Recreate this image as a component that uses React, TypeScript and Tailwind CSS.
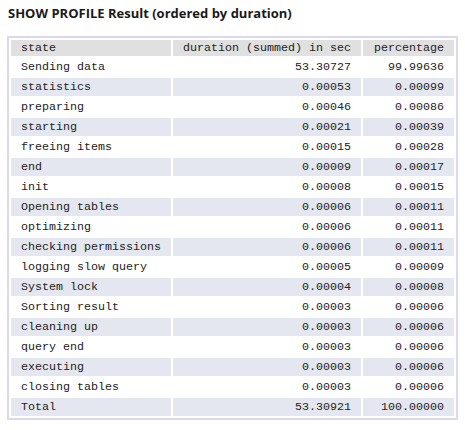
import React from "react";

const rows: [string, string, string][] = [
  ["Sending data", "53.30727", "99.99636"],
  ["statistics", "0.00053", "0.00099"],
  ["preparing", "0.00046", "0.00086"],
  ["starting", "0.00021", "0.00039"],
  ["freeing items", "0.00015", "0.00028"],
  ["end", "0.00009", "0.00017"],
  ["init", "0.00008", "0.00015"],
  ["Opening tables", "0.00006", "0.00011"],
  ["optimizing", "0.00006", "0.00011"],
  ["checking permissions", "0.00006", "0.00011"],
  ["logging slow query", "0.00005", "0.00009"],
  ["System lock", "0.00004", "0.00008"],
  ["Sorting result", "0.00003", "0.00006"],
  ["cleaning up", "0.00003", "0.00006"],
  ["query end", "0.00003", "0.00006"],
  ["executing", "0.00003", "0.00006"],
  ["closing tables", "0.00003", "0.00006"],
  ["Total", "53.30921", "100.00000"],
];

export default function App() {
  return (
    <div className="w-[465px] h-[430px] bg-white text-[#1a1a1a]">
      <div
        className="pl-[8px] pt-[5px] h-[36px] text-[13px] font-bold leading-[16px]"
        style={{ fontFamily: '"Open Sans", Tahoma, sans-serif' }}
      >
        SHOW PROFILE Result (ordered by duration)
      </div>
      <div className="ml-[7px] w-[451px] border-2 border-[#dcd8ef]">
        <table
          className="w-full border-separate border-spacing-[2px] text-[11.67px] leading-[14px] text-[#222]"
          style={{ fontFamily: '"Liberation Mono", "Courier New", monospace' }}
        >
          <thead>
            <tr className="h-[16px]">
              <th className="bg-[#e0e0e0] w-[160px] px-[10px] py-0 text-left font-normal">state</th>
              <th className="bg-[#e0e0e0] w-[188px] px-[10px] py-0 text-right font-normal">duration (summed) in sec</th>
              <th className="bg-[#e0e0e0] px-[10px] py-0 text-right font-normal">percentage</th>
            </tr>
          </thead>
          <tbody>
            {rows.map((r, i) => {
              const bg = i % 2 === 1 ? "bg-[#e4e7ef]" : "bg-white";
              return (
                <tr key={i} className="h-[18px]">
                  <td className={`${bg} px-[10px] py-0 text-left`}>{r[0]}</td>
                  <td className={`${bg} px-[10px] py-0 text-right`}>{r[1]}</td>
                  <td className={`${bg} px-[10px] py-0 text-right`}>{r[2]}</td>
                </tr>
              );
            })}
          </tbody>
        </table>
      </div>
    </div>
  );
}
